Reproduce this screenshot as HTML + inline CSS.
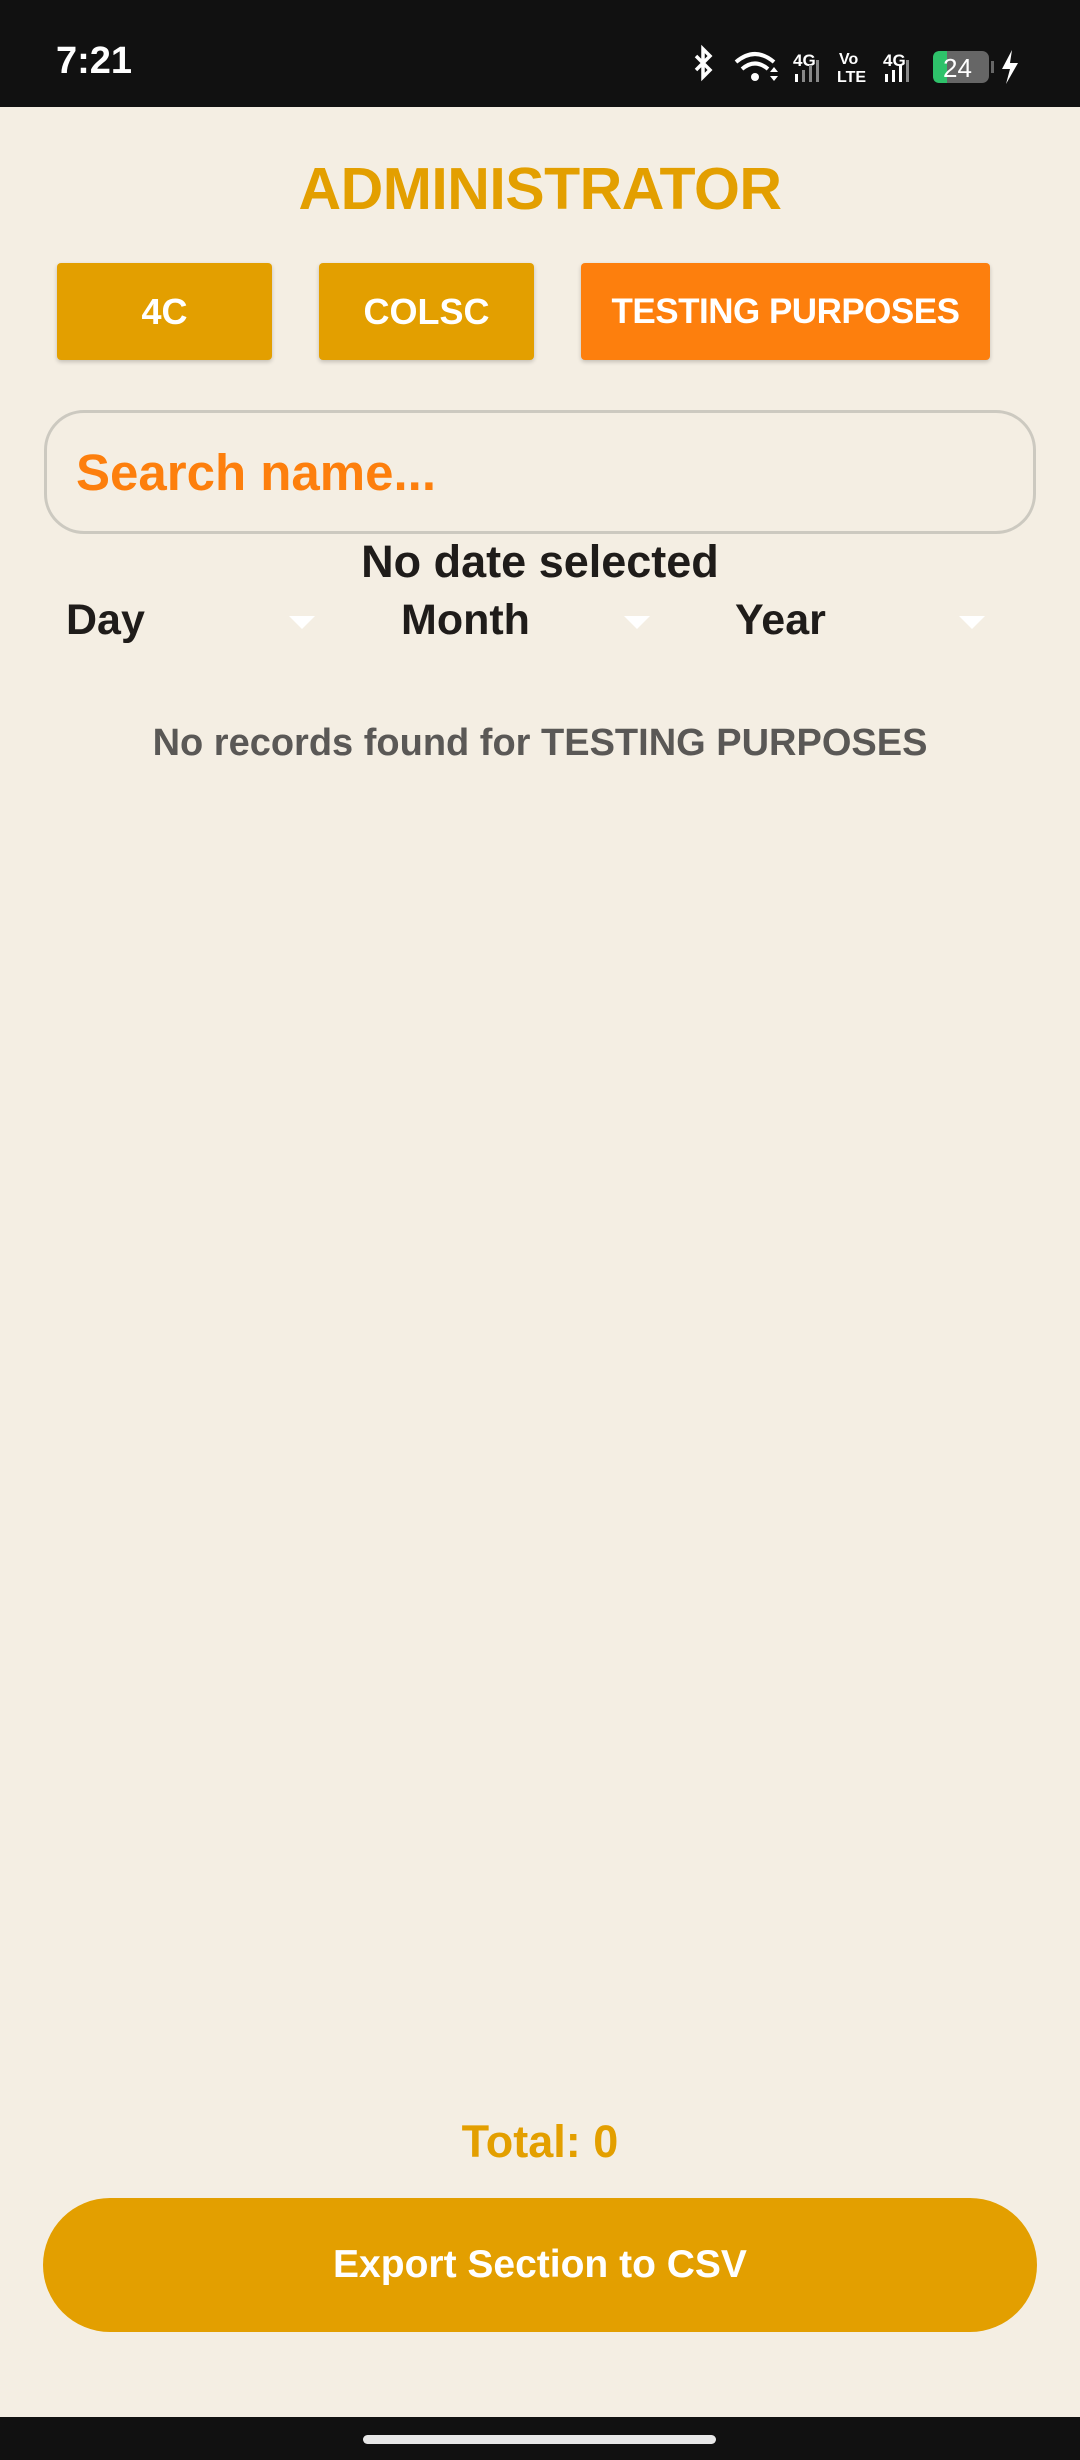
<!DOCTYPE html>
<html><head><meta charset="utf-8"><style>
*{margin:0;padding:0;box-sizing:border-box}
body{width:1080px;height:2460px;background:#f4eee3;font-family:"Liberation Sans",sans-serif;font-weight:bold;position:relative;overflow:hidden}
.a{position:absolute}
.sb{left:0;top:0;width:1080px;height:107px;background:#111}
.c{text-align:center;white-space:nowrap}
.btn{background:#e39f00;color:#fff;border-radius:4px;box-shadow:0 2px 4px rgba(0,0,0,.2);display:flex;align-items:center;justify-content:center;font-size:36px}
.tri{width:0;height:0;border-left:13px solid transparent;border-right:13px solid transparent;border-top:13px solid #fff}
</style></head><body>
<div class="a sb"></div>
<div class="a" style="left:56px;top:40px;color:#fff;font-size:38px;">7:21</div>
<svg class="a" style="left:690px;top:44px" width="340" height="44" viewBox="0 0 340 44">
<path d="M6 12 L20 26 L13 33 L13 5 L20 12 L6 26" stroke="#fff" stroke-width="3.5" fill="none"/>
<path d="M46 18 Q65 2 84 18" stroke="#fff" stroke-width="4" fill="none"/>
<path d="M52 25 Q65 14 78 25" stroke="#fff" stroke-width="4" fill="none"/>
<circle cx="65" cy="33" r="4" fill="#fff"/>
<path d="M80 28l4-5 4 5zM80 32l4 5 4-5z" fill="#fff"/>
<text x="103" y="22" fill="#fff" font-size="17" font-weight="bold" font-family="Liberation Sans">4G</text>
<rect x="105" y="30" width="3" height="8" fill="#fff"/><rect x="112" y="26" width="3" height="12" fill="#888"/><rect x="119" y="21" width="3" height="17" fill="#888"/><rect x="126" y="16" width="3" height="22" fill="#888"/>
<text x="149" y="20" fill="#fff" font-size="16" font-weight="bold" font-family="Liberation Sans">Vo</text>
<text x="147" y="38" fill="#fff" font-size="16" font-weight="bold" font-family="Liberation Sans">LTE</text>
<text x="193" y="22" fill="#fff" font-size="17" font-weight="bold" font-family="Liberation Sans">4G</text>
<rect x="195" y="30" width="3" height="8" fill="#fff"/><rect x="202" y="26" width="3" height="12" fill="#fff"/><rect x="209" y="21" width="3" height="17" fill="#fff"/><rect x="216" y="16" width="3" height="22" fill="#888"/>
<rect x="243" y="7" width="56" height="32" rx="7" fill="#666"/>
<path d="M250 7 H257 V39 H250 Q243 39 243 32 V14 Q243 7 250 7Z" fill="#2ec26a"/>
<rect x="301" y="17" width="3" height="12" fill="#666"/>
<text x="253" y="33" fill="#fff" font-size="26" font-family="Liberation Sans" font-weight="normal">24</text>
<path d="M322 6 L312 25 H320 L316 40 L328 19 H320 Z" fill="#fff"/>
</svg>
<div class="a c" style="left:0;width:1080px;top:155px;font-size:59px;color:#e39f00;letter-spacing:-0.5px">ADMINISTRATOR</div>
<div class="a btn" style="left:57px;top:263px;width:215px;height:97px">4C</div>
<div class="a btn" style="left:319px;top:263px;width:215px;height:97px">COLSC</div>
<div class="a btn" style="left:581px;top:263px;width:409px;height:97px;background:#fd7f0d;font-size:35px;letter-spacing:-0.5px">TESTING PURPOSES</div>
<div class="a" style="left:44px;top:410px;width:992px;height:124px;border:3px solid #ccc9c0;border-radius:40px"></div>
<div class="a" style="left:76px;top:443px;font-size:51px;color:#fd7f0d">Search name...</div>
<div class="a c" style="left:0;width:1080px;top:536px;font-size:45px;color:#1f1c1a">No date selected</div>
<div class="a" style="left:66px;top:596px;font-size:43px;color:#1f1c1a">Day</div>
<div class="a" style="left:401px;top:596px;font-size:43px;color:#1f1c1a">Month</div>
<div class="a" style="left:735px;top:596px;font-size:43px;color:#1f1c1a">Year</div>
<div class="a tri" style="left:289px;top:616px"></div>
<div class="a tri" style="left:624px;top:616px"></div>
<div class="a tri" style="left:959px;top:616px"></div>
<div class="a c" style="left:0;width:1080px;top:722px;font-size:38px;color:#5a5856">No records found for TESTING PURPOSES</div>
<div class="a c" style="left:0;width:1080px;top:2116px;font-size:45px;color:#e39f00">Total: 0</div>
<div class="a" style="left:43px;top:2198px;width:994px;height:134px;border-radius:67px;background:#e39f00;color:#fff;font-size:39px;display:flex;align-items:center;justify-content:center">Export Section to CSV</div>
<div class="a" style="left:0;top:2417px;width:1080px;height:43px;background:#111"></div>
<div class="a" style="left:363px;top:2435px;width:353px;height:9px;border-radius:5px;background:#e8e8e8"></div>
</body></html>
